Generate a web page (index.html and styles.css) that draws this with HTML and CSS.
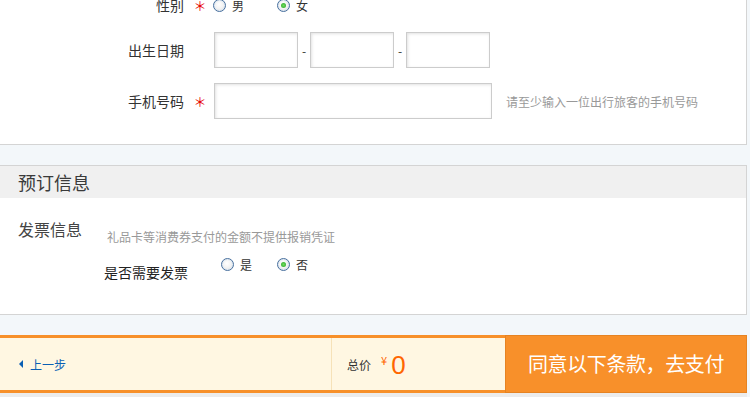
FILE: index.html
```html
<!DOCTYPE html>
<html lang="zh-CN">
<head>
<meta charset="utf-8">
<title>预订</title>
<link rel="stylesheet" href="styles.css">
</head>
<body>
<div class="page">
  <section class="card card-top">
    <div class="row row-gender">
      <div class="lbl">性别</div>
      <div class="star">＊</div>
      <div class="fields">
        <label class="opt opt-gender"><span class="radio"></span><span class="opt-text">男</span></label>
        <label class="opt opt-gender"><span class="radio on"></span><span class="opt-text">女</span></label>
      </div>
    </div>
    <div class="row row-date">
      <div class="lbl">出生日期</div>
      <div class="star"></div>
      <div class="fields">
        <span class="input input-date"></span>
        <span class="dash">-</span>
        <span class="input input-date"></span>
        <span class="dash">-</span>
        <span class="input input-date"></span>
      </div>
    </div>
    <div class="row row-phone">
      <div class="lbl">手机号码</div>
      <div class="star">＊</div>
      <div class="fields">
        <span class="input input-phone"></span>
        <span class="hint">请至少输入一位出行旅客的手机号码</span>
      </div>
    </div>
  </section>

  <section class="card card-order">
    <div class="card-head">预订信息</div>
    <div class="card-body">
      <div class="inv-label">发票信息</div>
      <div class="inv-content">
        <div class="note">礼品卡等消费券支付的金额不提供报销凭证</div>
        <div class="question">
          <div class="q-label">是否需要发票</div>
          <div class="q-opts">
            <label class="opt opt-inv"><span class="radio"></span><span class="opt-text">是</span></label>
            <label class="opt opt-inv"><span class="radio on"></span><span class="opt-text">否</span></label>
          </div>
        </div>
      </div>
    </div>
  </section>

  <div class="paybar">
    <div class="back"><span class="tri"></span><span class="back-text">上一步</span></div>
    <div class="total">
      <span class="total-lbl">总价</span>
      <span class="yen">¥</span>
      <span class="amount">0</span>
    </div>
    <div class="pay-btn">同意以下条款，去支付</div>
  </div>
  <div class="foot"></div>
</div>
</body>
</html>
```

FILE: styles.css
```css
* { box-sizing: border-box; }
html, body { margin: 0; padding: 0; }
body {
  background: #f3f7fa;
  font-family: "Noto Sans CJK SC", "Noto Sans", sans-serif;
  color: #333;
  overflow: hidden;
  width: 750px;
  height: 397px;
}
.page {
  width: 748px;
  margin-left: -1px;
}
.card {
  background: #fff;
  border: 1px solid #d4d4d4;
}
.card-top {
  margin-top: -6px;
  padding-bottom: 25px;
}
.row {
  display: flex;
  align-items: center;
}
.row-gender { height: 20px; }
.row-date { height: 36px; margin-top: 17px; }
.row-phone { height: 36px; margin-top: 15px; }
.lbl {
  width: 184px;
  text-align: right;
  font-size: 14px;
  color: #333;
}
.star {
  width: 30px;
  text-align: center;
  color: #e60000;
  font-size: 13px;
  padding-left: 2px;
  line-height: 1;
}
.fields {
  display: flex;
  align-items: center;
}
.opt {
  display: flex;
  align-items: center;
  font-size: 12px;
  color: #333;
}
.opt-gender { width: 64px; margin-left: -1px; }
.opt-gender + .opt-gender { margin-left: 0; }
.radio {
  width: 13px;
  height: 13px;
  border-radius: 50%;
  border: 1px solid #48709e;
  background: radial-gradient(circle at 45% 40%, #ffffff 0%, #f2f2f2 50%, #d2d6da 100%);
  box-shadow: inset 0 0 0 1px #dfe8f1;
  position: relative;
  flex: none;
}
.radio.on::after {
  content: "";
  position: absolute;
  left: 3px;
  top: 3px;
  width: 5px;
  height: 5px;
  border-radius: 50%;
  background: radial-gradient(circle, #6fdc5c 0%, #27a327 100%);
}
.opt-text { margin-left: 6px; }
.input {
  display: block;
  height: 36px;
  border: 1px solid #cccccc;
  background: #fff;
  box-shadow: inset 1px 1px 3px #e2e2e2;
}
.input-date { width: 84px; }
.input-phone { width: 278px; }
.dash {
  width: 12px;
  text-align: center;
  font-size: 12px;
  color: #333;
}
.hint {
  margin-left: 14px;
  font-size: 12px;
  color: #999;
}

.card-order {
  margin-top: 20px;
}
.card-head {
  height: 32px;
  background: #f0f0f0;
  padding-left: 18px;
  font-size: 18px;
  line-height: 32px;
  color: #3a3a3a;
}
.card-body {
  height: 116px;
  display: flex;
  padding-top: 21px;
}
.inv-label {
  width: 107px;
  padding-left: 18px;
  font-size: 16px;
  line-height: 20px;
  color: #444;
}
.inv-content {
  display: flex;
  flex-direction: column;
  padding-top: 10px;
  margin-left: -3px;
}
.note {
  padding-left: 3px;
  font-size: 12px;
  line-height: 16px;
  color: #999;
}
.question {
  display: flex;
  align-items: flex-start;
  margin-top: 11px;
}
.q-label {
  font-size: 14px;
  line-height: 20px;
  margin-top: 6px;
  color: #222;
}
.q-opts {
  display: flex;
  margin-left: 33px;
}
.opt-inv { width: 56px; }

.paybar {
  margin-top: 20px;
  margin-left: 1px;
  width: 747px;
  height: 58px;
  background: #fff7e2;
  border-top: 3px solid #f7902a;
  border-bottom: 3px solid #f7902a;
  display: flex;
  align-items: center;
}
.back {
  width: 331px;
  height: 100%;
  display: flex;
  align-items: center;
  padding-left: 19px;
  color: #0a5fb4;
  font-size: 12px;
}
.tri {
  width: 0;
  height: 0;
  border-top: 4px solid transparent;
  border-bottom: 4px solid transparent;
  border-right: 4px solid #0a5fb4;
  margin-right: 7px;
}
.total {
  width: 174px;
  height: 100%;
  border-left: 1px solid #f6e2b8;
  display: flex;
  align-items: center;
  padding-left: 15px;
}
.total-lbl {
  font-size: 12px;
  color: #333;
}
.yen {
  font-size: 11px;
  color: #ff6600;
  margin-left: 10px;
  align-self: center;
  margin-top: -8px;
}
.amount {
  font-family: "Liberation Sans", Arial, sans-serif;
  font-size: 26px;
  color: #ff6600;
  margin-left: 4px;
  margin-top: 2px;
}
.pay-btn {
  width: 242px;
  align-self: stretch;
  margin: -3px 0;
  background: #f8902a;
  border: 1px solid #e68322;
  color: #fff;
  font-size: 20px;
  display: flex;
  align-items: center;
  justify-content: center;
  padding-bottom: 1px;
  letter-spacing: -0.4px;
}
.foot {
  height: 10px;
  background: #ececec;
}
```
